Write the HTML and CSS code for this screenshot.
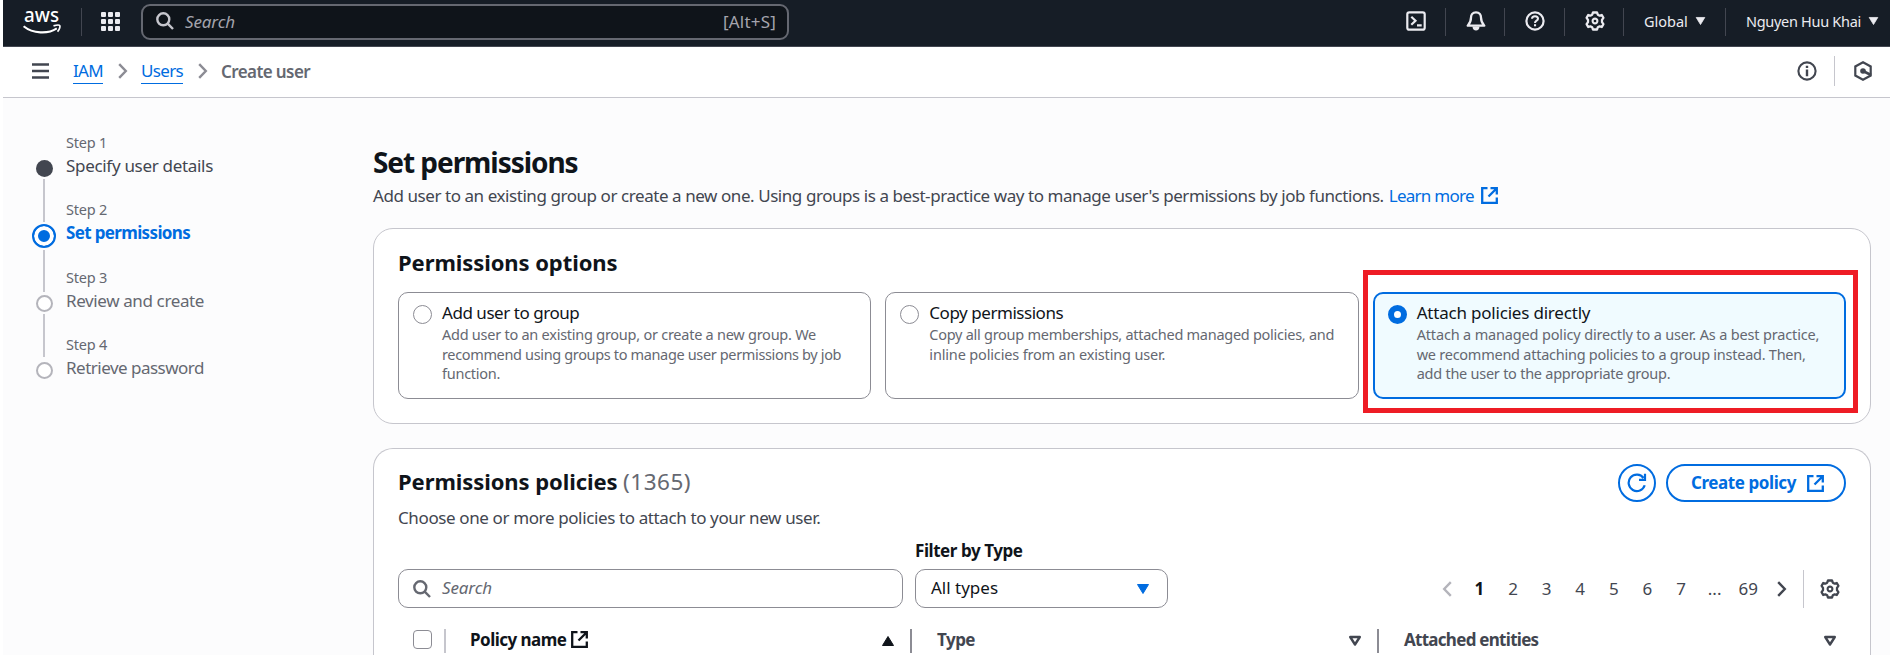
FILE: index.html
```html
<!DOCTYPE html>
<html lang="en">
<head>
<meta charset="utf-8">
<title>Create user | IAM</title>
<link rel="stylesheet" href="styles.css">
</head>
<body>
<svg class="defs" width="0" height="0">
  <symbol id="external" viewBox="0 0 17 17"><path d="M6.500 1.200H1.200v14.600h14.600v-5.300M9.500 1.200h6.300v6.300M15.500 1.500 7.500 9.500" fill="none" stroke="currentColor" stroke-width="2.300"/></symbol>
  <symbol id="search" viewBox="0 0 18 18"><circle cx="7.300" cy="7.300" r="6" fill="none" stroke="currentColor" stroke-width="2.400"/><path d="m11.700 11.700 5.300 5.300" stroke="currentColor" stroke-width="2.400"/></symbol>
  <symbol id="chevron" viewBox="0 0 10 16"><path d="m1.200 1.200 6.600 6.800-6.600 6.800" fill="none" stroke="currentColor" stroke-width="2.400"/></symbol>
  <symbol id="gear" viewBox="-10 -10 20 20"><path d="M-2-8.500H2L2.800-6.300 4.700-5.300 6.800-6 8.400-3.200 7-1.200V1.200L8.400 3.200 6.800 6 4.700 5.300 2.800 6.300 2 8.500H-2L-2.800 6.300-4.700 5.300-6.800 6-8.400 3.200-7 1.200V-1.200L-8.400-3.200-6.800-6-4.700-5.300-2.800-6.300Z" fill="none" stroke="currentColor" stroke-width="2.300" stroke-linejoin="round"/><circle r="2.400" fill="none" stroke="currentColor" stroke-width="2.100"/></symbol>
  <symbol id="caret" viewBox="0 0 14 12"><path d="M1.500 1.500h11L7 10.500Z" fill="currentColor" stroke="currentColor" stroke-linejoin="round"/></symbol>
  <symbol id="caret-open" viewBox="0 0 14 12"><path d="M2.200 2h9.600L7 9.500Z" fill="none" stroke="currentColor" stroke-width="2.400" stroke-linejoin="round"/></symbol>
</svg>

<header class="topbar">
  <svg class="logo" viewBox="0 -10 38 34"><text class="logo-text" x="1" y="12.200" textLength="35" lengthAdjust="spacingAndGlyphs">aws</text><path d="M0.600 16.200C10 23.800 25 24.300 33.800 18.400" fill="none" stroke="#fff" stroke-width="2.100"/><path d="M30.500 15.900c3-1 5.800-1.100 6.300-.2.500 1-.3 4-2.300 6" fill="none" stroke="#fff" stroke-width="1.700"/></svg>
  <i class="logo-rule"></i>
  <svg class="apps" viewBox="0 0 19 19"><g fill="#ebebf0"><rect width="5" height="5" rx="1"/><rect x="7" width="5" height="5" rx="1"/><rect x="14" width="5" height="5" rx="1"/><rect y="7" width="5" height="5" rx="1"/><rect x="7" y="7" width="5" height="5" rx="1"/><rect x="14" y="7" width="5" height="5" rx="1"/><rect y="14" width="5" height="5" rx="1"/><rect x="7" y="14" width="5" height="5" rx="1"/><rect x="14" y="14" width="5" height="5" rx="1"/></g></svg>
  <div class="global-search"><svg class="i18"><use href="#search"/></svg><em>Search</em><span class="hint">[Alt+S]</span></div>
  <nav class="tools">
    <span class="tool"><svg class="i20" viewBox="0 0 20 20"><rect x="1.300" y="1.300" width="17.400" height="17.400" rx="2" fill="none" stroke="currentColor" stroke-width="2.200"/><path d="m5.300 5.800 4.200 4-4.200 4M11 14.300h4.700" fill="none" stroke="currentColor" stroke-width="2.200"/></svg></span>
    <span class="tool"><svg class="i20" viewBox="0 0 20 20"><path d="M10 1.300c-3.500 0-5 2.600-5 5.200 0 4-1.200 6-3.300 8.200h16.600C16.200 12.500 15 10.500 15 6.500c0-2.600-1.500-5.200-5-5.200Z" fill="none" stroke="currentColor" stroke-width="2.300" stroke-linejoin="round"/><path d="M6.500 15.500h7c0 2.600-1.500 4-3.500 4s-3.500-1.400-3.500-4Z" fill="currentColor"/></svg></span>
    <span class="tool"><svg class="i20" viewBox="0 0 20 20"><circle cx="10" cy="10" r="8.600" fill="none" stroke="currentColor" stroke-width="2.200"/><path d="M7 7.800C7 6.200 8.200 5.200 10 5.200s3 1 3 2.500c0 2-3 2-3 4.200" fill="none" stroke="currentColor" stroke-width="2"/><rect x="9" y="13.200" width="2.100" height="2.100" fill="currentColor"/></svg></span>
    <span class="tool"><svg class="i20"><use href="#gear"/></svg></span>
    <span class="tool region"><span>Global</span><svg class="mini"><use href="#caret"/></svg></span>
    <span class="tool account"><span>Nguyen Huu Khai</span><svg class="mini"><use href="#caret"/></svg></span>
  </nav>
</header>

<div class="crumbs">
  <svg class="menu" viewBox="0 0 17 16"><path d="M0 1.500h17M0 8h17M0 14.500h17" stroke="#424650" stroke-width="2.300"/></svg>
  <a class="crumb">IAM</a><svg class="chev"><use href="#chevron"/></svg>
  <a class="crumb">Users</a><svg class="chev"><use href="#chevron"/></svg>
  <b class="current">Create user</b>
  <svg class="info i20" viewBox="0 0 20 20"><circle cx="10" cy="10" r="8.600" fill="none" stroke="currentColor" stroke-width="2.100"/><path d="M10 8.500v6.700M10 4.800v2.200" stroke="currentColor" stroke-width="2.400"/></svg>
  <i class="crumb-rule"></i>
  <svg class="hex" viewBox="0 0 18 20"><path d="M9 1.300 16.700 5.500v9L9 18.700 1.300 14.500v-9Z" fill="none" stroke="currentColor" stroke-width="2.200"/><circle cx="9" cy="10" r="2.800" fill="currentColor"/><path d="m9 10 8 4" stroke="currentColor" stroke-width="2.600"/></svg>
</div>

<div class="page">
  <ol class="steps">
    <li class="step done"><small>Step 1</small><span>Specify user details</span><i class="dot"></i></li>
    <li class="step active"><small>Step 2</small><span>Set permissions</span><i class="dot"></i></li>
    <li class="step"><small>Step 3</small><span>Review and create</span><i class="dot"></i></li>
    <li class="step"><small>Step 4</small><span class="tight">Retrieve password</span><i class="dot"></i></li>
  </ol>

  <main class="main">
    <h1>Set permissions</h1>
    <p class="lead"><span>Add user to an existing group or create a new one. Using groups is a best-practice way to manage user's permissions by job functions.</span><a class="learn"><span>Learn more</span><svg class="ext"><use href="#external"/></svg></a></p>

    <section class="panel options">
      <h2>Permissions options</h2>
      <div class="tiles">
        <div class="tile group"><i class="radio"></i><div><h3>Add user to group</h3><p>Add user to an existing group, or create a new group. We<br><span class="line-long">recommend using groups to manage user permissions by job</span><br>function.</p></div></div>
        <div class="tile copy"><i class="radio"></i><div><h3>Copy permissions</h3><p>Copy all group memberships, attached managed policies, and<br><span class="line-short">inline policies from an existing user.</span></p></div></div>
        <div class="tile selected"><i class="radio"></i><div><h3>Attach policies directly</h3><p><span class="line-short">Attach a managed policy directly to a user. As a best practice,</span><br>we recommend attaching policies to a group instead. Then,<br>add the user to the appropriate group.</p></div><i class="highlight"></i></div>
      </div>
    </section>

    <section class="panel policies">
      <div class="policies-head">
        <h2>Permissions policies <span class="count">(1365)</span></h2>
        <div class="actions">
          <span class="refresh"><svg class="i20" viewBox="0 0 20 20"><path d="M17.700 12.200A8.200 8.200 0 1 1 16.500 5M18 .8v6h-6" fill="none" stroke="currentColor" stroke-width="2.200"/></svg></span>
          <span class="create"><b>Create policy</b><svg class="ext"><use href="#external"/></svg></span>
        </div>
      </div>
      <p class="hint-line">Choose one or more policies to attach to your new user.</p>
      <div class="filters">
        <div class="field search-field"><svg class="i18"><use href="#search"/></svg><em>Search</em></div>
        <div class="filter"><b>Filter by Type</b><div class="field select"><span>All types</span><svg class="caret"><use href="#caret"/></svg></div></div>
        <div class="pager">
          <svg class="chev prev"><use href="#chevron"/></svg>
          <b>1</b><span>2</span><span>3</span><span>4</span><span>5</span><span>6</span><span>7</span><span>...</span><span>69</span>
          <svg class="chev next"><use href="#chevron"/></svg>
          <i class="pager-rule"></i>
          <svg class="i20"><use href="#gear"/></svg>
        </div>
      </div>
      <div class="thead">
        <div class="th check"><i class="checkbox"></i></div>
        <div class="th name"><b>Policy name</b><svg class="ext"><use href="#external"/></svg><svg class="caret up"><use href="#caret"/></svg></div>
        <div class="th type"><b>Type</b><svg class="caret"><use href="#caret-open"/></svg></div>
        <div class="th attached"><b>Attached entities</b><svg class="caret"><use href="#caret-open"/></svg></div>
      </div>
    </section>
  </main>
</div>
</body>
</html>
```
FILE: styles.css
```css
* { box-sizing: border-box; }
body {
  margin: 0;
  height: 655px;
  overflow: hidden;
  padding-left: 3px;
  background: #fff;
  color: #0f141a;
  font: 17px/25px "Noto Sans", "Open Sans", sans-serif;
}
h1, h2, h3, p, ol { margin: 0; padding: 0; }
svg { display: block; flex: none; }
i { flex: none; }
em { letter-spacing: -.12px; }
.defs { position: absolute; }
.i20 { width: 20px; height: 20px; }
.i18 { width: 18px; height: 18px; }
.ext { width: 17px; height: 17px; }
.caret { width: 14px; height: 12px; }
.mini { width: 11px; height: 10px; }
.chev { width: 10px; height: 16px; color: #8c8c94; }

/* Global navigation */
.topbar {
  display: flex;
  align-items: flex-start;
  height: 47px;
  padding-left: 20px;
  background: #161d26;
  border-bottom: 1px solid #424650;
  color: #ebebf0;
}
.logo { width: 38px; height: 34px; overflow: visible; }
.logo-text { font: 500 19px "Noto Sans", sans-serif; fill: #fff; }
.logo-rule { width: 1px; height: 28px; margin: 8px 19px 0 20px; background: #424650; }
.apps { width: 19px; height: 19px; margin-top: 12px; }
.global-search {
  display: flex;
  flex: none;
  align-items: center;
  width: 648px;
  height: 36px;
  margin: 4px 0 0 21px;
  padding: 0 11px 2px 13px;
  border: 2px solid #656871;
  border-radius: 9px;
  background: #0f141a;
  color: #a4a4ad;
}
.global-search .i18 { color: #c6c6cd; }
.global-search em { margin-left: 11px; }
.hint { margin-left: auto; letter-spacing: .2px; }
.tools { display: flex; margin: 8px 0 0 auto; font-size: 14.500px; }
.tool { display: flex; flex: none; align-items: center; height: 28px; width: 59.500px; padding: 0 0 2px 20px; border-left: 1.500px solid #424650; }
.tool:first-child { border-left-color: transparent; }
.tool.region { width: 102px; }
.tool.account { width: 165px; letter-spacing: -.3px; }
.tool .mini { margin-left: 7px; }
.tool > span { white-space: nowrap; }

/* Breadcrumbs */
.crumbs {
  display: flex;
  align-items: center;
  height: 51px;
  padding: 0 18px 2px 29px;
  border-bottom: 1px solid #c6c6cd;
  color: #424650;
}
.menu { width: 17px; height: 16px; margin-right: 24px; }
.crumb { height: 24px; line-height: 22px; margin-top: 2px; color: #006ce0; border-bottom: 1.500px solid #006ce0; letter-spacing: -.67px; }
.crumbs .chev { margin: 0 13px 0 15px; }
.current { color: #656871; font-weight: 600; letter-spacing: -.6px; }
.info { margin-left: auto; }
.crumb-rule { width: 1px; height: 30px; margin: 0 19px 0 17px; background: #c6c6cd; }
.hex { width: 18px; height: 20px; }

/* Page */
.page { display: flex; height: 557px; background: #fcfcfd; }
.steps { width: 370px; padding: 32px 0 0 63px; list-style: none; color: #656871; }
.step { position: relative; display: flex; flex-direction: column; align-items: flex-start; height: 67.300px; letter-spacing: -.38px; }
.step small { font-size: 14.500px; line-height: 24px; letter-spacing: -.23px; }
.step span { line-height: 24px; }
.step .tight { letter-spacing: -.51px; }
.done span { color: #424650; letter-spacing: -.31px; }
.active span { color: #006ce0; font-weight: 700; letter-spacing: -.65px; }
.dot { position: absolute; left: -30px; top: 30px; width: 17px; height: 17px; border: 2.500px solid #b4b4bb; border-radius: 50%; background: #fff; }
.done .dot { border: 0; background: #424650; }
.active .dot { left: -34px; top: 27px; width: 24px; height: 24px; border: 2px solid #006ce0; background: #006ce0; box-shadow: inset 0 0 0 4px #fff; }
.step:not(:last-child)::after { content: ""; position: absolute; left: -23px; top: 49px; width: 2px; height: 43px; background: #c6c6cd; }
.step.active::after { top: 53px; height: 42px; }

.main { width: 1498px; padding-top: 46px; }
h1 { font-size: 28px; line-height: 36px; font-weight: 700; letter-spacing: -1.060px; }
.lead { display: flex; margin-top: 3px; color: #424650; white-space: nowrap; letter-spacing: -.435px; }
.learn { display: flex; align-items: center; gap: 7px; margin-left: 5px; color: #006ce0; letter-spacing: -.74px; }
.panel { border: 1px solid #c6c6cd; border-radius: 20px; background: #fff; }
h2 { font-size: 22px; line-height: 28px; font-weight: 700; letter-spacing: -.08px; }
.options { height: 196px; margin-top: 20px; padding: 19px 24px 0; }
.tiles { display: grid; grid-template-columns: repeat(3, 1fr); gap: 14px; height: 107px; margin-top: 16px; }
.tile { position: relative; display: flex; gap: 10px; padding: 8px 14px; border: 1px solid #8c8c94; border-radius: 10px; white-space: nowrap; }
.tile h3 { font-size: 17px; line-height: 24px; font-weight: 400; letter-spacing: -.46px; }
.tile p { font-size: 14.500px; line-height: 19.500px; color: #656871; letter-spacing: -.25px; }
.tile .line-long { letter-spacing: -.35px; }
.tile .line-short { letter-spacing: -.16px; }
.tile.copy p { letter-spacing: -.27px; }
.radio { width: 19px; height: 19px; margin-top: 4px; border: 1px solid #8c8c94; border-radius: 50%; background: #fff; }
.selected { padding: 7px 13px; border: 2px solid #006ce0; background: #f0fbff; }
.selected h3 { letter-spacing: -.2px; }
.selected .radio { border: 6px solid #006ce0; }
.highlight { position: absolute; inset: -24px -14px -16px -12px; border: 5px solid #ee1c25; }

/* Policies table */
.policies { height: 207px; overflow: hidden; margin-top: 24px; padding: 15px 24px 0; border-bottom: 0; border-radius: 20px 20px 0 0; }
.policies-head { display: flex; justify-content: space-between; height: 38px; }
.policies-head h2 { margin-top: 3px; }
.count { color: #656871; font-size: 22.500px; font-weight: 400; letter-spacing: .5px; }
.actions { display: flex; gap: 10px; color: #006ce0; }
.refresh, .create { display: flex; align-items: center; justify-content: center; height: 38px; border: 2px solid #006ce0; border-radius: 19px; }
.refresh { width: 38px; }
.create { width: 180px; gap: 11px; padding-left: 3px; letter-spacing: -.42px; }
.create b { margin-top: -2px; }
.hint-line { margin-top: 3px; color: #424650; letter-spacing: -.38px; }
.filters { display: flex; align-items: flex-end; height: 78px; }
.field { display: flex; align-items: center; height: 39px; padding-bottom: 2px; border: 1px solid #8c8c94; border-radius: 10px; }
.search-field { width: 505px; padding-left: 14px; color: #656871; }
.search-field em { margin-left: 11px; }
.field svg { margin-top: 2px; }
.filter { width: 253px; margin-left: 12px; }
.filter b { display: inline-block; margin-bottom: 6px; letter-spacing: -.44px; }
.select { padding: 0 17px 2px 15px; }
.select .caret { margin-left: auto; color: #006ce0; }
.pager { display: flex; align-items: center; height: 38px; margin-left: auto; padding-right: 6px; color: #424650; }
.pager > span, .pager > b { width: 33.600px; padding-bottom: 2px; text-align: center; }
.pager b { color: #0f141a; }
.pager .prev { margin-right: 11px; color: #b4b4bb; transform: scaleX(-1); }
.pager .next { margin-left: 12px; color: #424650; }
.pager-rule { width: 1px; height: 38px; margin: 0 16px; background: #c6c6cd; }
.thead { display: flex; align-items: center; height: 65px; color: #424650; }
.th { display: flex; align-items: center; height: 24px; border-right: 2px solid #8c8c94; }
.th b { margin-top: -3px; letter-spacing: -.52px; }
.th .ext { margin-top: -2px; }
.check { width: 48px; padding-left: 15px; border-right-color: #c6c6cd; }
.checkbox { width: 19px; height: 19px; margin-top: -2px; border: 1px solid #8c8c94; border-radius: 4px; }
.name { width: 466px; padding-left: 24px; color: #0f141a; }
.name .ext { margin-left: 5px; }
.th .caret { margin: 0 15px 0 auto; }
.caret.up { transform: scaleY(-1); }
.type { width: 467px; padding-left: 25px; }
.attached { flex: 1; padding-left: 25px; border: 0; }
.attached b { letter-spacing: -.72px; }
.attached .caret { margin-right: 9px; }
```
